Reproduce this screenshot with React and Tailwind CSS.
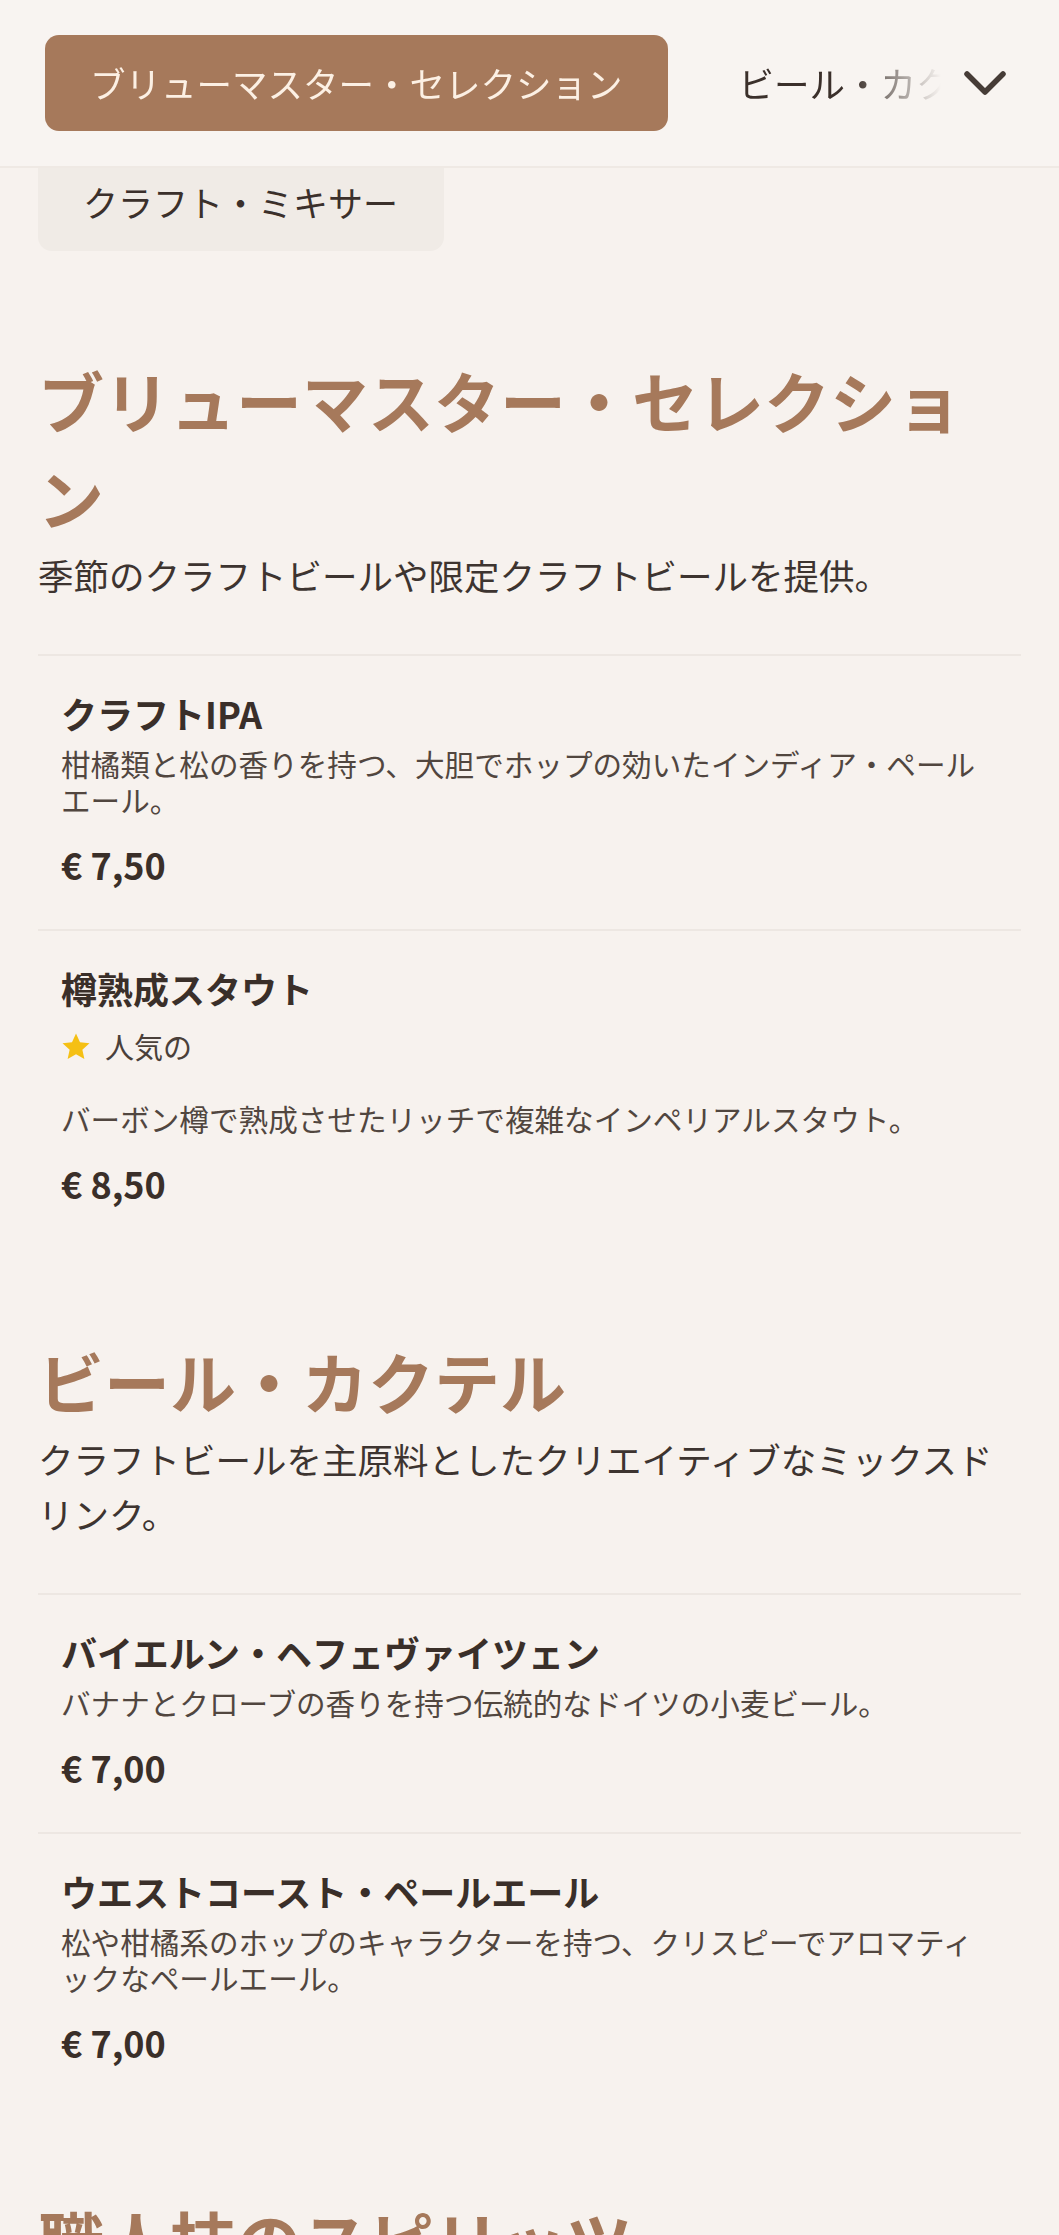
import { useState } from "react";

const tabs = ["ブリューマスター・セレクション", "ビール・カクテル", "職人技のスピリッツ"];

const sections = [
  {
    title: "ブリューマスター・セレクション",
    description: "季節のクラフトビールや限定クラフトビールを提供。",
    items: [
      { name: "クラフトIPA", description: "柑橘類と松の香りを持つ、大胆でホップの効いたインディア・ペールエール。", price: "€ 7,50" },
      { name: "樽熟成スタウト", popular: true, description: "バーボン樽で熟成させたリッチで複雑なインペリアルスタウト。", price: "€ 8,50" },
    ],
  },
  {
    title: "ビール・カクテル",
    description: "クラフトビールを主原料としたクリエイティブなミックスドリンク。",
    items: [
      { name: "バイエルン・ヘフェヴァイツェン", description: "バナナとクローブの香りを持つ伝統的なドイツの小麦ビール。", price: "€ 7,00" },
      { name: "ウエストコースト・ペールエール", description: "松や柑橘系のホップのキャラクターを持つ、クリスピーでアロマティックなペールエール。", price: "€ 7,00" },
    ],
  },
  {
    title: "職人技のスピリッツ",
    description: "",
    items: [],
  },
];

function Star() {
  return (
    <svg width="30" height="30" viewBox="0 0 24 24" className="shrink-0">
      <path d="M12 1.2l3.2 7 7.6.8-5.7 5.1 1.6 7.5L12 17.8l-6.7 3.8 1.6-7.5-5.7-5.1 7.6-.8z" fill="#f5c014" />
    </svg>
  );
}

function MenuItem({ item }) {
  return (
    <div className="border-t-2 border-[#ede7e2] px-[23px] pt-[31px] pb-[39px]">
      <p className="text-[36px] font-bold leading-[52px] text-[#3a2f29]">{item.name}</p>
      {item.popular && (
        <div className="mt-[12px] flex h-[42px] items-center gap-[14px] text-[29px] text-[#4a403a]">
          <Star />
          <span>人気の</span>
        </div>
      )}
      <p className={`${item.popular ? "mt-[33px]" : "mt-[7px]"} text-[29.6px] leading-[36px] text-[#51463f]`}>{item.description}</p>
      <p className="mt-[20px] text-[36px] font-bold leading-[52px] text-[#3a2f29]">{item.price}</p>
    </div>
  );
}

export default function App() {
  const [active, setActive] = useState(0);

  return (
    <div className="min-h-[2235px] overflow-hidden bg-[#f7f2ee] font-['Noto_Sans_CJK_JP',sans-serif]">
      <header className="sticky top-0 z-10 flex h-[168px] items-center gap-[22px] border-b-2 border-[#efe9e4] bg-[#f8f4f1] pl-[45px] pr-[52px]">
        <div className="flex flex-1 items-center gap-[26px] overflow-hidden [mask-image:linear-gradient(to_right,#000_90%,transparent)] [-webkit-mask-image:linear-gradient(to_right,#000_90%,transparent)]">
          {tabs.map((tab, index) => (
            <button
              key={tab}
              type="button"
              onClick={() => setActive(index)}
              className={`h-[96px] shrink-0 whitespace-nowrap rounded-[14px] px-[45px] text-[35.5px] ${active === index ? "bg-[#a6795b] text-[#fcf0e4]" : "text-[#3b302b]"}`}
            >
              {tab}
            </button>
          ))}
        </div>
        <button type="button" className="grid h-[44px] w-[44px] place-items-center">
          <svg width="44" height="26" viewBox="0 0 44 26" fill="none">
            <polyline points="4,4 22,22 40,4" stroke="#463c37" strokeWidth="5.5" strokeLinecap="round" strokeLinejoin="round" />
          </svg>
        </button>
      </header>

      <main className="px-[38px]">
        <div className="h-[83px] w-[406px] rounded-b-[14px] bg-[#f0ebe6] pl-[45px] pt-[8px] text-[35px] leading-[52px] text-[#3b302b]">
          クラフト・ミキサー
        </div>

        {sections.map((section, index) => (
          <section key={section.title} className={index === 0 ? "mt-[100px]" : "mt-[84px]"}>
            <h2 className="text-[66px] font-bold leading-[97px] text-[#a6795b]">{section.title}</h2>
            {section.description && (
              <p className="mt-[2px] text-[35.5px] leading-[55px] text-[#3d3430]">{section.description}</p>
            )}
            {section.items.length > 0 && (
              <div className="mt-[52px]">
                {section.items.map((item) => (
                  <MenuItem key={item.name} item={item} />
                ))}
              </div>
            )}
          </section>
        ))}
      </main>
    </div>
  );
}
